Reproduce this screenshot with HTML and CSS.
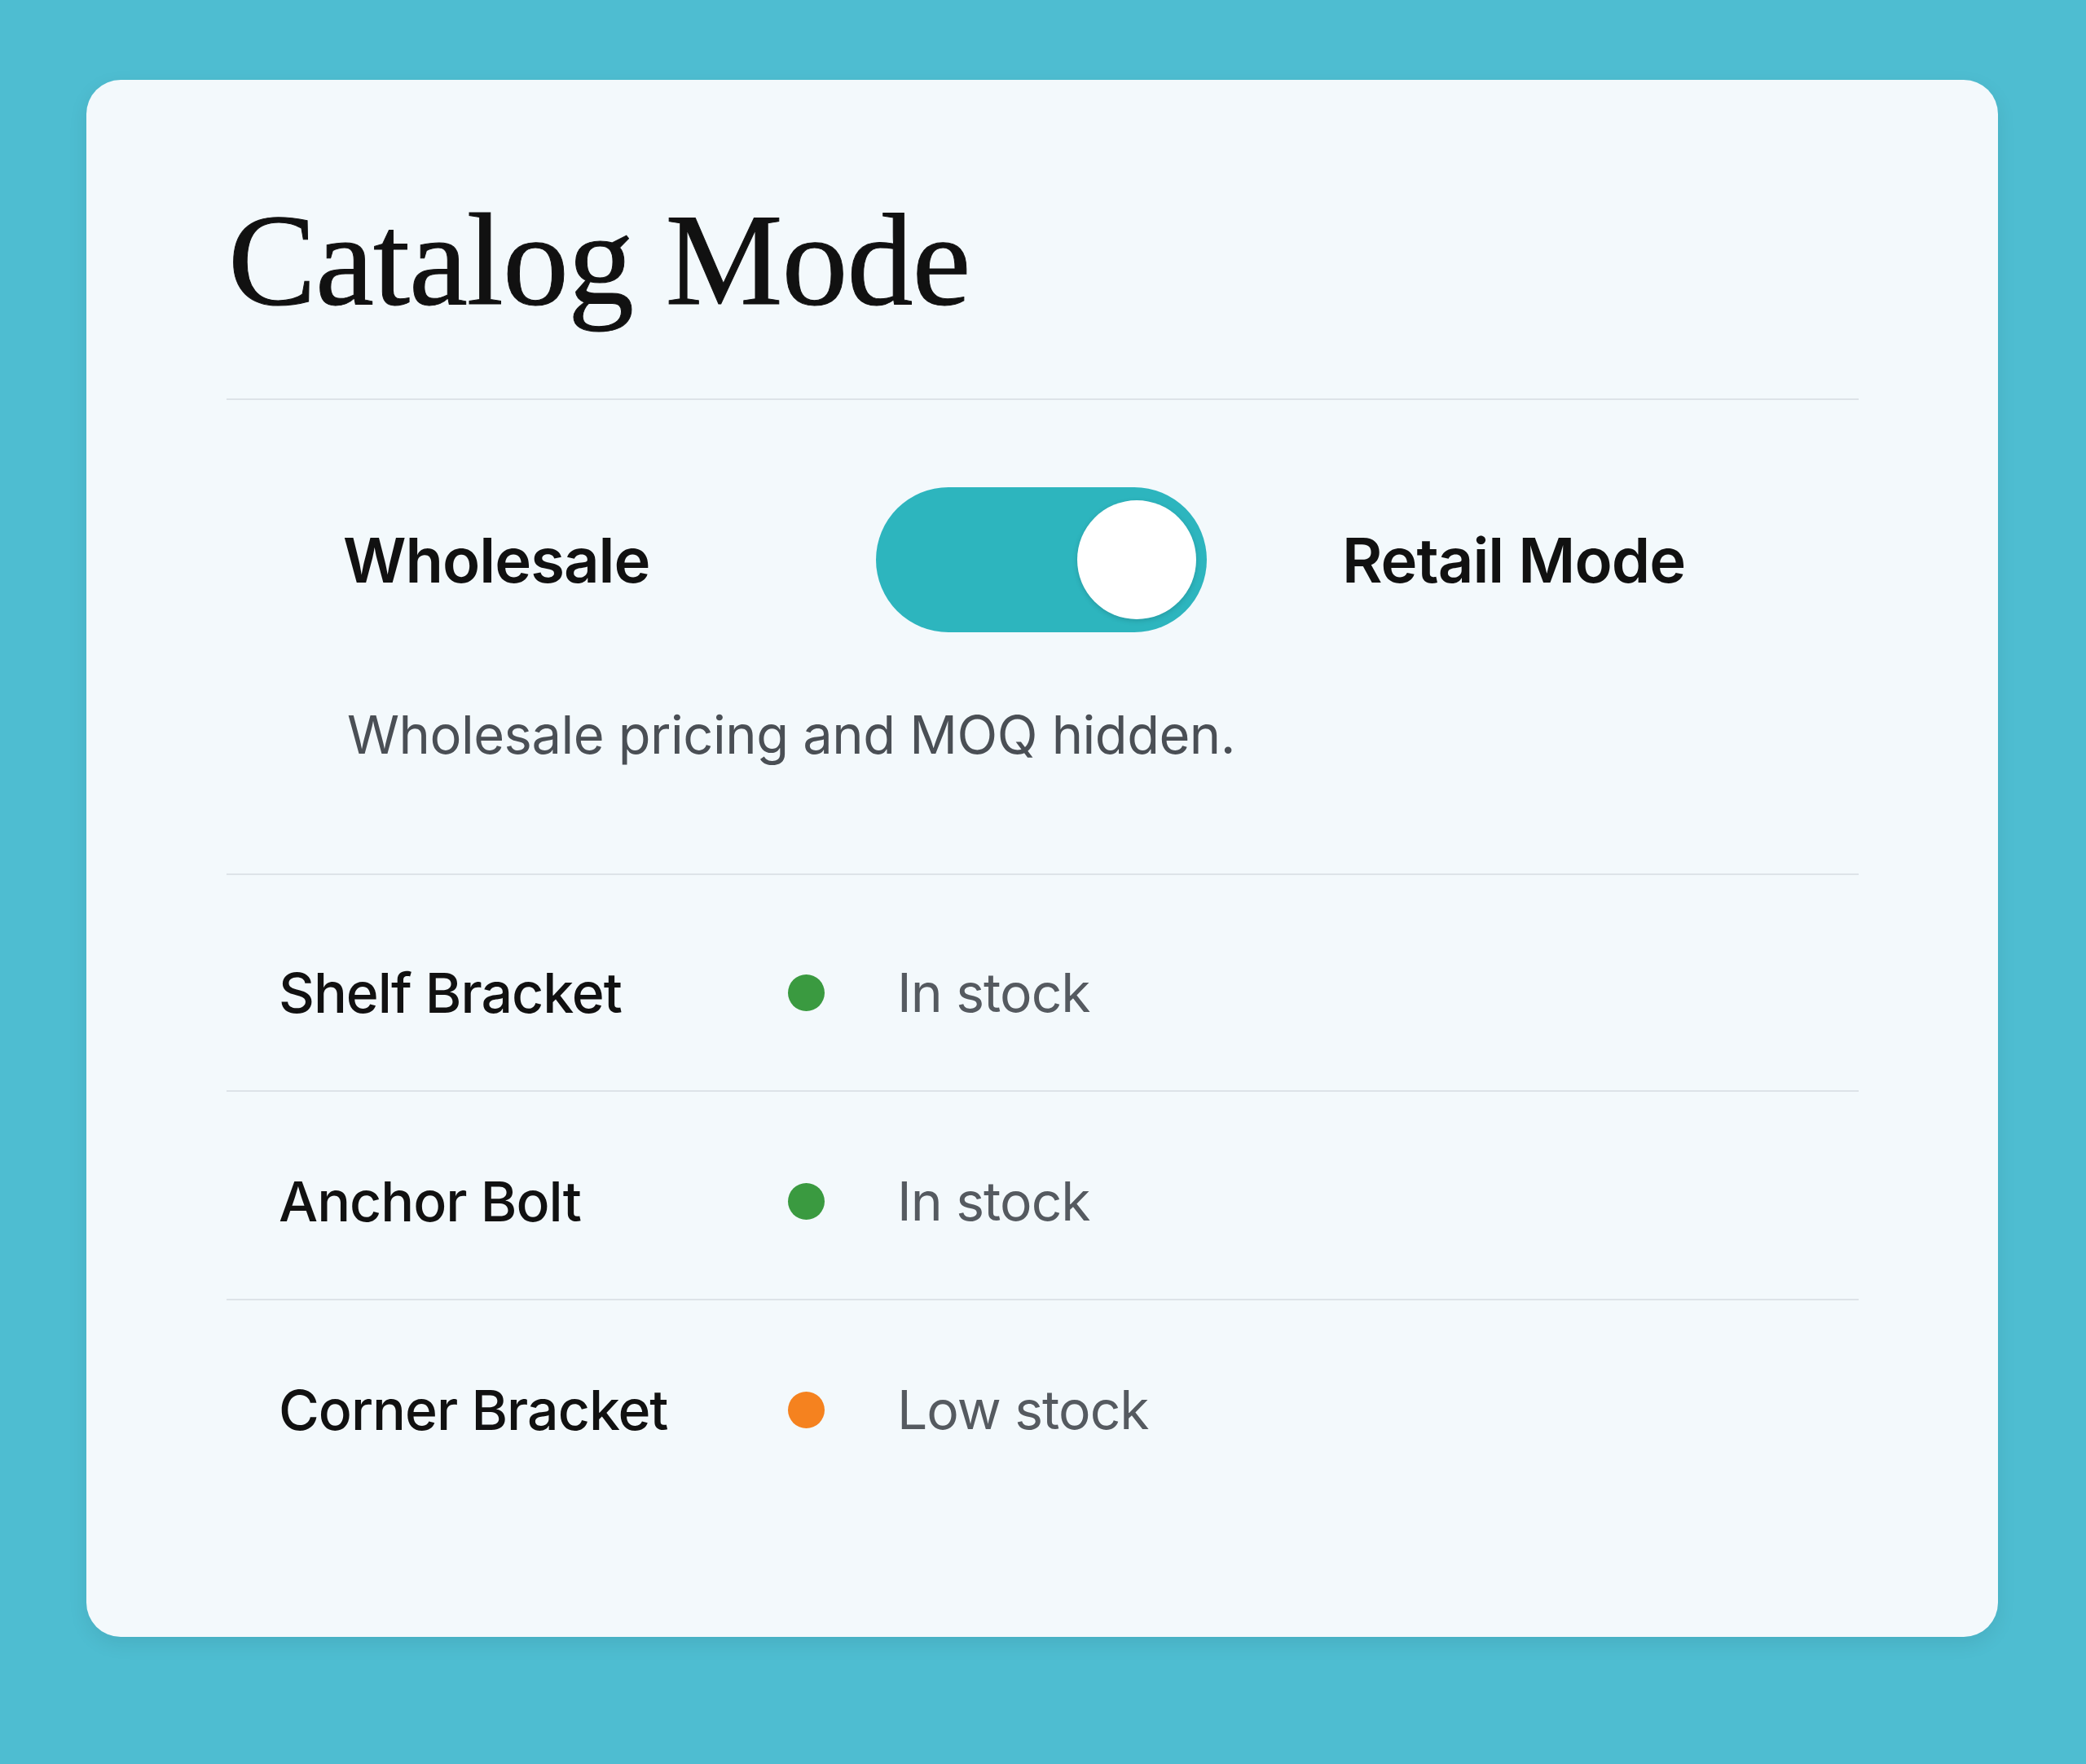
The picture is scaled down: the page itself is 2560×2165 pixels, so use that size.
FILE: index.html
```html
<!DOCTYPE html>
<html lang="en">
<head>
    <meta charset="UTF-8">
    <meta name="viewport" content="width=device-width, initial-scale=1.0">
    <title>Catalog Mode</title>
    <link rel="stylesheet" href="styles.css">
</head>
<body>
    <div class="card">
        <h1 class="card-title">Catalog Mode</h1>

        <div class="mode-switch">
            <span class="mode-label">Wholesale</span>
            <button class="toggle is-on" type="button" aria-pressed="true" aria-label="Retail Mode">
                <span class="toggle-knob"></span>
            </button>
            <span class="mode-label">Retail Mode</span>
        </div>
        <p class="mode-note">Wholesale pricing and MOQ hidden.</p>

        <ul class="stock-list">
            <li class="stock-row">
                <span class="item-name">Shelf Bracket</span>
                <span class="dot dot-ok"></span>
                <span class="item-status">In stock</span>
            </li>
            <li class="stock-row">
                <span class="item-name">Anchor Bolt</span>
                <span class="dot dot-ok"></span>
                <span class="item-status">In stock</span>
            </li>
            <li class="stock-row">
                <span class="item-name">Corner Bracket</span>
                <span class="dot dot-low"></span>
                <span class="item-status">Low stock</span>
            </li>
        </ul>
    </div>
</body>
</html>
```

FILE: styles.css
```css
html, body {
    margin: 0;
    padding: 0;
    background-color: #4ebdd1;
}

body {
    font-family: Inter, "Noto Sans", sans-serif;
    color: #111;
    padding: 98px 108px 80px 106px;
}

.card {
    background-color: #f3f9fc;
    border-radius: 42px;
    padding: 125px 171px 239px 172px;
    box-shadow: 0 8px 24px rgba(0, 0, 0, 0.08);
}

.card-title {
    margin: 0;
    font-family: "Liberation Serif", "DejaVu Serif", serif;
    font-weight: 400;
    font-size: 162px;
    line-height: 192px;
    letter-spacing: -1px;
    color: #111;
    padding-left: 2px;
    padding-bottom: 74px;
    border-bottom: 2px solid #dde3e8;
    -webkit-text-stroke: 1px #111;
}

/* wholesale / retail switch */
.mode-switch {
    display: grid;
    grid-template-columns: 488px 406px auto;
    column-gap: 166px;
    align-items: center;
    padding: 107px 0 0 143px;
}

.mode-label {
    font-size: 76px;
    font-weight: 600;
    letter-spacing: -1px;
    line-height: 90px;
}

.toggle {
    display: flex;
    justify-content: flex-end;
    align-items: center;
    width: 406px;
    height: 178px;
    padding: 16px 13px;
    border: none;
    border-radius: 89px;
    background-color: #2db5be;
    cursor: pointer;
}

.toggle-knob {
    width: 146px;
    height: 146px;
    border-radius: 50%;
    background-color: #fff;
    box-shadow: 0 2px 6px rgba(0, 0, 0, 0.15);
}

.mode-note {
    margin: 0;
    padding: 86px 0 130px 148px;
    font-size: 65px;
    line-height: 80px;
    letter-spacing: -0.5px;
    color: #4a4f55;
    border-bottom: 2px solid #dde3e8;
}

/* stock rows */
.stock-list {
    list-style: none;
    margin: 0;
    padding: 10px 0 0;
}

.stock-row {
    display: grid;
    grid-template-columns: 536px 45px auto;
    column-gap: 89px;
    align-items: center;
    padding: 94px 0 80px 64px;
    border-bottom: 2px solid #dde3e8;
}

.stock-row:last-child {
    border-bottom: none;
    padding-bottom: 0;
}

.item-name {
    font-size: 68px;
    font-weight: 500;
    letter-spacing: -1px;
    line-height: 80px;
}

.item-status {
    font-size: 66px;
    font-weight: 400;
    letter-spacing: -1px;
    line-height: 80px;
    color: #555a60;
}

.dot {
    width: 45px;
    height: 45px;
    border-radius: 50%;
}

.dot-ok {
    background-color: #3a9a40;
}

.dot-low {
    background-color: #f5821f;
}
```
